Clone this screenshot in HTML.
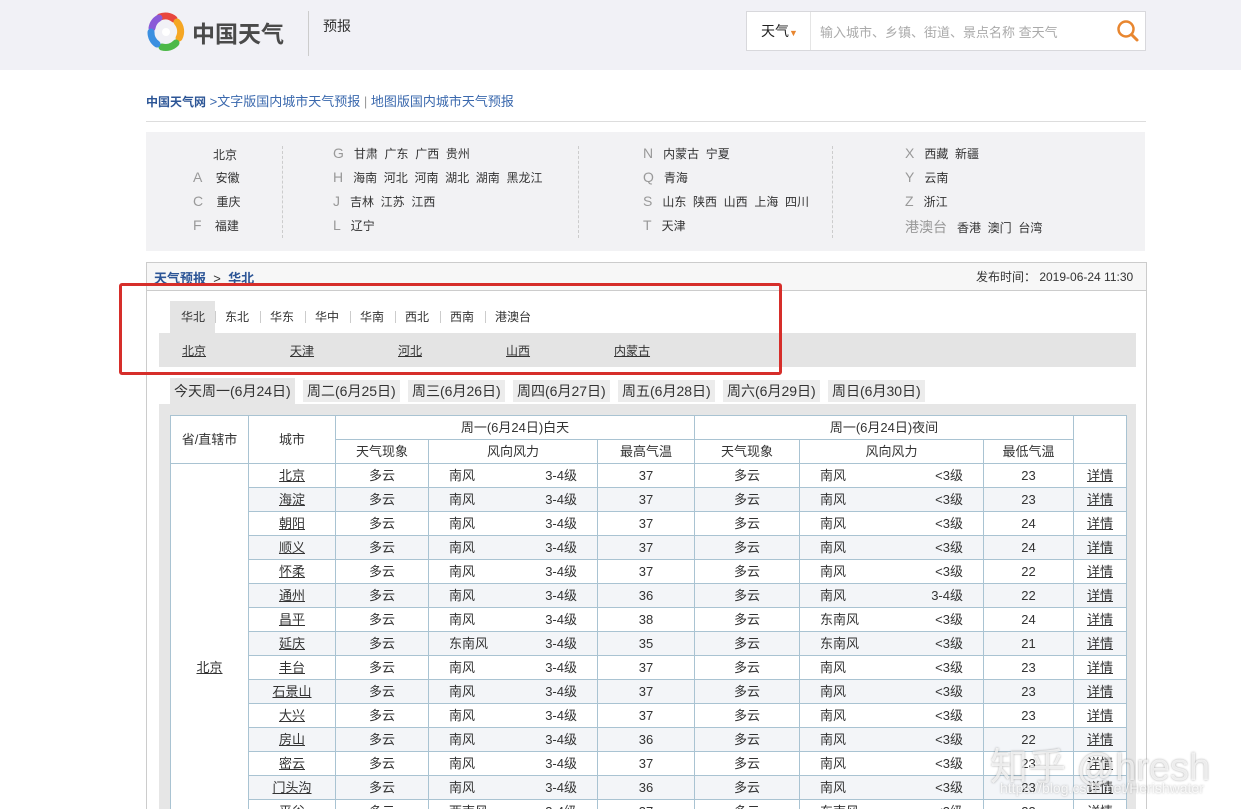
<!DOCTYPE html>
<html style="height:809px;overflow:hidden"><head><meta charset="utf-8">
<style>
*{margin:0;padding:0;box-sizing:border-box}
body{width:1241px;height:809px;overflow:hidden;background:#fff;font-family:"Liberation Sans","Noto Sans CJK SC",sans-serif;color:#333;font-size:13px;position:relative}
.abs{position:absolute}
a{color:#333}
.hdr{left:0;top:0;width:1241px;height:70px;background:#f1f1f6}
.prov{left:146px;top:132px;width:999px;height:119px;background:#f2f2f4}
.prov .r{position:absolute;font-size:12px;white-space:nowrap}
.prov .l{color:#999;font-size:14px}
.dash{position:absolute;top:146px;height:92px;border-left:1px dashed #ccc}
.main{left:146px;top:262px;width:1001px;height:547px;border:1px solid #ccc;border-bottom:none}
.mh{left:147px;top:263px;width:999px;height:28px;background:#f7f7f7;border-bottom:1px solid #ccc}
.tab{position:absolute;top:301px;height:32px;line-height:32px;font-size:12px}
.sep{position:absolute;top:311px;height:12px;border-left:1px solid #ccc}
.bar{left:159px;top:333px;width:977px;height:34px;background:#e4e4e4}
.bar a{position:absolute;top:9px;font-size:12px;text-decoration:underline}
.dt{position:absolute;top:380px;height:22px;line-height:22px;background:#ececec;font-size:14px;padding:0 4px}
.panel{left:159px;top:404px;width:977px;height:405px;background:#e6e6e6}
.tw{position:absolute;left:170px;top:415px;width:960px;height:394px;overflow:hidden}
table{border-collapse:collapse;background:#fff;font-size:13px}
td{border:1px solid #a9c3d2;height:24px;line-height:22px;text-align:center;padding:0;white-space:nowrap}
tr.g td{background:#f3f5f8}
td.w{text-align:left;padding-left:20px;padding-right:20px}
td.w span{float:right}
td u,.u{text-decoration:underline}
</style></head><body>
<div class="abs hdr"></div>
<svg class="abs" style="left:146px;top:11px" width="40" height="42" viewBox="-20 -21 40 42">
<g fill="none" stroke-width="7" stroke-linecap="round">
<path d="M-6,-15 A14,14 0 0 1 8,-13" stroke="#e8473e"/>
<path d="M-14,-4 A14,14 0 0 1 -7,-14" stroke="#8a5ad8"/>
<path d="M11,-10 A14,14 0 0 1 13,6" stroke="#f5a623"/>
<path d="M10,11 A14,14 0 0 1 -4,15" stroke="#4cb848"/>
<path d="M-9,12 A14,14 0 0 1 -15,0" stroke="#3b8fe0"/>
</g><circle r="4" fill="#fff"/></svg>
<div class="abs" style="left:192px;top:15px;font-size:23px;color:#4a4a4a;font-weight:bold">中国天气</div>
<div class="abs" style="left:308px;top:11px;height:45px;border-left:1px solid #ccc"></div>
<div class="abs" style="left:323px;top:16px;font-size:14px;color:#333">预报</div>
<div class="abs" style="left:746px;top:11px;width:400px;height:40px;background:#fff;border:1px solid #d8d8dc"></div>
<div class="abs" style="left:761px;top:21px;font-size:14px;color:#222">天气<span style="color:#e8862f;font-size:9px">▼</span></div>
<div class="abs" style="left:810px;top:12px;height:38px;border-left:1px solid #e5e5e5"></div>
<div class="abs" style="left:820px;top:22px;font-size:13px;color:#aaa">输入城市、乡镇、街道、景点名称 查天气</div>
<svg class="abs" style="left:1116px;top:19px" width="24" height="24"><circle cx="10" cy="10" r="7.5" fill="none" stroke="#e8862f" stroke-width="2.5"/><path d="M15.5,15.5 L21,21" stroke="#e8862f" stroke-width="3" stroke-linecap="round"/></svg>

<div class="abs" style="left:146px;top:91px;font-size:13px;color:#3a68ad"><b style="color:#2c5596;font-size:12px">中国天气网</b> &gt;文字版国内城市天气预报 <span style="color:#999">|</span> 地图版国内城市天气预报</div>
<div class="abs" style="left:146px;top:121px;width:1000px;border-top:1px solid #ddd"></div>

<div class="abs prov"></div>
<div class="prov abs" style="background:none">
<div class="r" style="left:67px;top:14px">北京</div>
<div class="r" style="left:47px;top:37px"><span class="l">A</span>&nbsp;&nbsp;&nbsp; 安徽</div>
<div class="r" style="left:47px;top:61px"><span class="l">C</span>&nbsp;&nbsp;&nbsp; 重庆</div>
<div class="r" style="left:47px;top:85px"><span class="l">F</span>&nbsp;&nbsp;&nbsp; 福建</div>
<div class="r" style="left:187px;top:13px"><span class="l">G</span>&nbsp;&nbsp; 甘肃 &nbsp;广东 &nbsp;广西 &nbsp;贵州</div>
<div class="r" style="left:187px;top:37px"><span class="l">H</span>&nbsp;&nbsp; 海南 &nbsp;河北 &nbsp;河南 &nbsp;湖北 &nbsp;湖南 &nbsp;黑龙江</div>
<div class="r" style="left:187px;top:61px"><span class="l">J</span>&nbsp;&nbsp; 吉林 &nbsp;江苏 &nbsp;江西</div>
<div class="r" style="left:187px;top:85px"><span class="l">L</span>&nbsp;&nbsp; 辽宁</div>
<div class="r" style="left:497px;top:13px"><span class="l">N</span>&nbsp;&nbsp; 内蒙古 &nbsp;宁夏</div>
<div class="r" style="left:497px;top:37px"><span class="l">Q</span>&nbsp;&nbsp; 青海</div>
<div class="r" style="left:497px;top:61px"><span class="l">S</span>&nbsp;&nbsp; 山东 &nbsp;陕西 &nbsp;山西 &nbsp;上海 &nbsp;四川</div>
<div class="r" style="left:497px;top:85px"><span class="l">T</span>&nbsp;&nbsp; 天津</div>
<div class="r" style="left:759px;top:13px"><span class="l">X</span>&nbsp;&nbsp; 西藏 &nbsp;新疆</div>
<div class="r" style="left:759px;top:37px"><span class="l">Y</span>&nbsp;&nbsp; 云南</div>
<div class="r" style="left:759px;top:61px"><span class="l">Z</span>&nbsp;&nbsp; 浙江</div>
<div class="r" style="left:759px;top:85px"><span class="l">港澳台</span>&nbsp;&nbsp; 香港 &nbsp;澳门 &nbsp;台湾</div>
</div>
<div class="dash" style="left:282px"></div><div class="dash" style="left:578px"></div><div class="dash" style="left:832px"></div>

<div class="abs main"></div>
<div class="abs mh"></div>
<div class="abs" style="left:154px;top:268px;font-size:13px;color:#2c5596;font-weight:bold"><u>天气预报</u> <span style="color:#333;font-weight:normal">&nbsp;&gt;&nbsp;</span> <u>华北</u></div>
<div class="abs" style="left:976px;top:268px;font-size:12px;color:#333">发布时间：&nbsp;2019-06-24 11:30</div>

<div class="abs" style="left:170px;top:301px;width:45px;height:32px;background:#e4e4e4"></div>
<div class="tab" style="left:181px">华北</div>
<div class="sep" style="left:215px"></div><div class="tab" style="left:225px">东北</div>
<div class="sep" style="left:260px"></div><div class="tab" style="left:270px">华东</div>
<div class="sep" style="left:305px"></div><div class="tab" style="left:315px">华中</div>
<div class="sep" style="left:350px"></div><div class="tab" style="left:360px">华南</div>
<div class="sep" style="left:395px"></div><div class="tab" style="left:405px">西北</div>
<div class="sep" style="left:440px"></div><div class="tab" style="left:450px">西南</div>
<div class="sep" style="left:485px"></div><div class="tab" style="left:495px">港澳台</div>
<div class="abs bar"><a style="left:23px">北京</a><a style="left:131px">天津</a><a style="left:239px">河北</a><a style="left:347px">山西</a><a style="left:455px">内蒙古</a></div>
<div class="abs" style="left:119px;top:283px;width:663px;height:92px;border:3px solid #d62e2a;border-radius:3px"></div>

<div class="dt" style="left:170px;top:378px;height:26px;line-height:26px;background:#e6e6e6">今天周一(6月24日)</div>
<div class="dt" style="left:303px">周二(6月25日)</div>
<div class="dt" style="left:408px">周三(6月26日)</div>
<div class="dt" style="left:513px">周四(6月27日)</div>
<div class="dt" style="left:618px">周五(6月28日)</div>
<div class="dt" style="left:723px">周六(6月29日)</div>
<div class="dt" style="left:828px">周日(6月30日)</div>

<div class="abs panel"></div>
<div class="tw">
<table>
<colgroup><col style="width:78px"><col style="width:87px"><col style="width:93px"><col style="width:169px"><col style="width:97px"><col style="width:105px"><col style="width:184px"><col style="width:90px"><col style="width:53px"></colgroup>
<tr><td rowspan="2">省/直辖市</td><td rowspan="2">城市</td><td colspan="3">周一(6月24日)白天</td><td colspan="3">周一(6月24日)夜间</td><td rowspan="2"></td></tr>
<tr><td>天气现象</td><td>风向风力</td><td>最高气温</td><td>天气现象</td><td>风向风力</td><td>最低气温</td></tr>
<tr><td rowspan="17"><u>北京</u></td><td><u>北京</u></td><td>多云</td><td class="w"><span>3-4级</span>南风</td><td>37</td><td>多云</td><td class="w"><span>&lt;3级</span>南风</td><td>23</td><td><u>详情</u></td></tr>
<tr class="g"><td><u>海淀</u></td><td>多云</td><td class="w"><span>3-4级</span>南风</td><td>37</td><td>多云</td><td class="w"><span>&lt;3级</span>南风</td><td>23</td><td><u>详情</u></td></tr>
<tr><td><u>朝阳</u></td><td>多云</td><td class="w"><span>3-4级</span>南风</td><td>37</td><td>多云</td><td class="w"><span>&lt;3级</span>南风</td><td>24</td><td><u>详情</u></td></tr>
<tr class="g"><td><u>顺义</u></td><td>多云</td><td class="w"><span>3-4级</span>南风</td><td>37</td><td>多云</td><td class="w"><span>&lt;3级</span>南风</td><td>24</td><td><u>详情</u></td></tr>
<tr><td><u>怀柔</u></td><td>多云</td><td class="w"><span>3-4级</span>南风</td><td>37</td><td>多云</td><td class="w"><span>&lt;3级</span>南风</td><td>22</td><td><u>详情</u></td></tr>
<tr class="g"><td><u>通州</u></td><td>多云</td><td class="w"><span>3-4级</span>南风</td><td>36</td><td>多云</td><td class="w"><span>3-4级</span>南风</td><td>22</td><td><u>详情</u></td></tr>
<tr><td><u>昌平</u></td><td>多云</td><td class="w"><span>3-4级</span>南风</td><td>38</td><td>多云</td><td class="w"><span>&lt;3级</span>东南风</td><td>24</td><td><u>详情</u></td></tr>
<tr class="g"><td><u>延庆</u></td><td>多云</td><td class="w"><span>3-4级</span>东南风</td><td>35</td><td>多云</td><td class="w"><span>&lt;3级</span>东南风</td><td>21</td><td><u>详情</u></td></tr>
<tr><td><u>丰台</u></td><td>多云</td><td class="w"><span>3-4级</span>南风</td><td>37</td><td>多云</td><td class="w"><span>&lt;3级</span>南风</td><td>23</td><td><u>详情</u></td></tr>
<tr class="g"><td><u>石景山</u></td><td>多云</td><td class="w"><span>3-4级</span>南风</td><td>37</td><td>多云</td><td class="w"><span>&lt;3级</span>南风</td><td>23</td><td><u>详情</u></td></tr>
<tr><td><u>大兴</u></td><td>多云</td><td class="w"><span>3-4级</span>南风</td><td>37</td><td>多云</td><td class="w"><span>&lt;3级</span>南风</td><td>23</td><td><u>详情</u></td></tr>
<tr class="g"><td><u>房山</u></td><td>多云</td><td class="w"><span>3-4级</span>南风</td><td>36</td><td>多云</td><td class="w"><span>&lt;3级</span>南风</td><td>22</td><td><u>详情</u></td></tr>
<tr><td><u>密云</u></td><td>多云</td><td class="w"><span>3-4级</span>南风</td><td>37</td><td>多云</td><td class="w"><span>&lt;3级</span>南风</td><td>23</td><td><u>详情</u></td></tr>
<tr class="g"><td><u>门头沟</u></td><td>多云</td><td class="w"><span>3-4级</span>南风</td><td>36</td><td>多云</td><td class="w"><span>&lt;3级</span>南风</td><td>23</td><td><u>详情</u></td></tr>
<tr><td><u>平谷</u></td><td>多云</td><td class="w"><span>3-4级</span>西南风</td><td>37</td><td>多云</td><td class="w"><span>&lt;3级</span>东南风</td><td>23</td><td><u>详情</u></td></tr>
<tr class="g"><td><u>东城</u></td><td>多云</td><td class="w"><span>3-4级</span>南风</td><td>37</td><td>多云</td><td class="w"><span>&lt;3级</span>南风</td><td>23</td><td><u>详情</u></td></tr>
<tr><td><u>西城</u></td><td>多云</td><td class="w"><span>3-4级</span>南风</td><td>37</td><td>多云</td><td class="w"><span>&lt;3级</span>南风</td><td>23</td><td><u>详情</u></td></tr>
</table>
</div>
<div class="abs" style="left:990px;top:736px;font-size:38px;color:rgba(255,255,255,0.75);text-shadow:0 0 2px rgba(0,0,0,0.35);white-space:nowrap">知乎 @hresh</div>
<div class="abs" style="left:1000px;top:780px;font-size:14px;color:rgba(255,255,255,0.8);text-shadow:0 0 2px rgba(0,0,0,0.3);white-space:nowrap">https://blog.csdn.net/Herishwater</div>
</body></html>
